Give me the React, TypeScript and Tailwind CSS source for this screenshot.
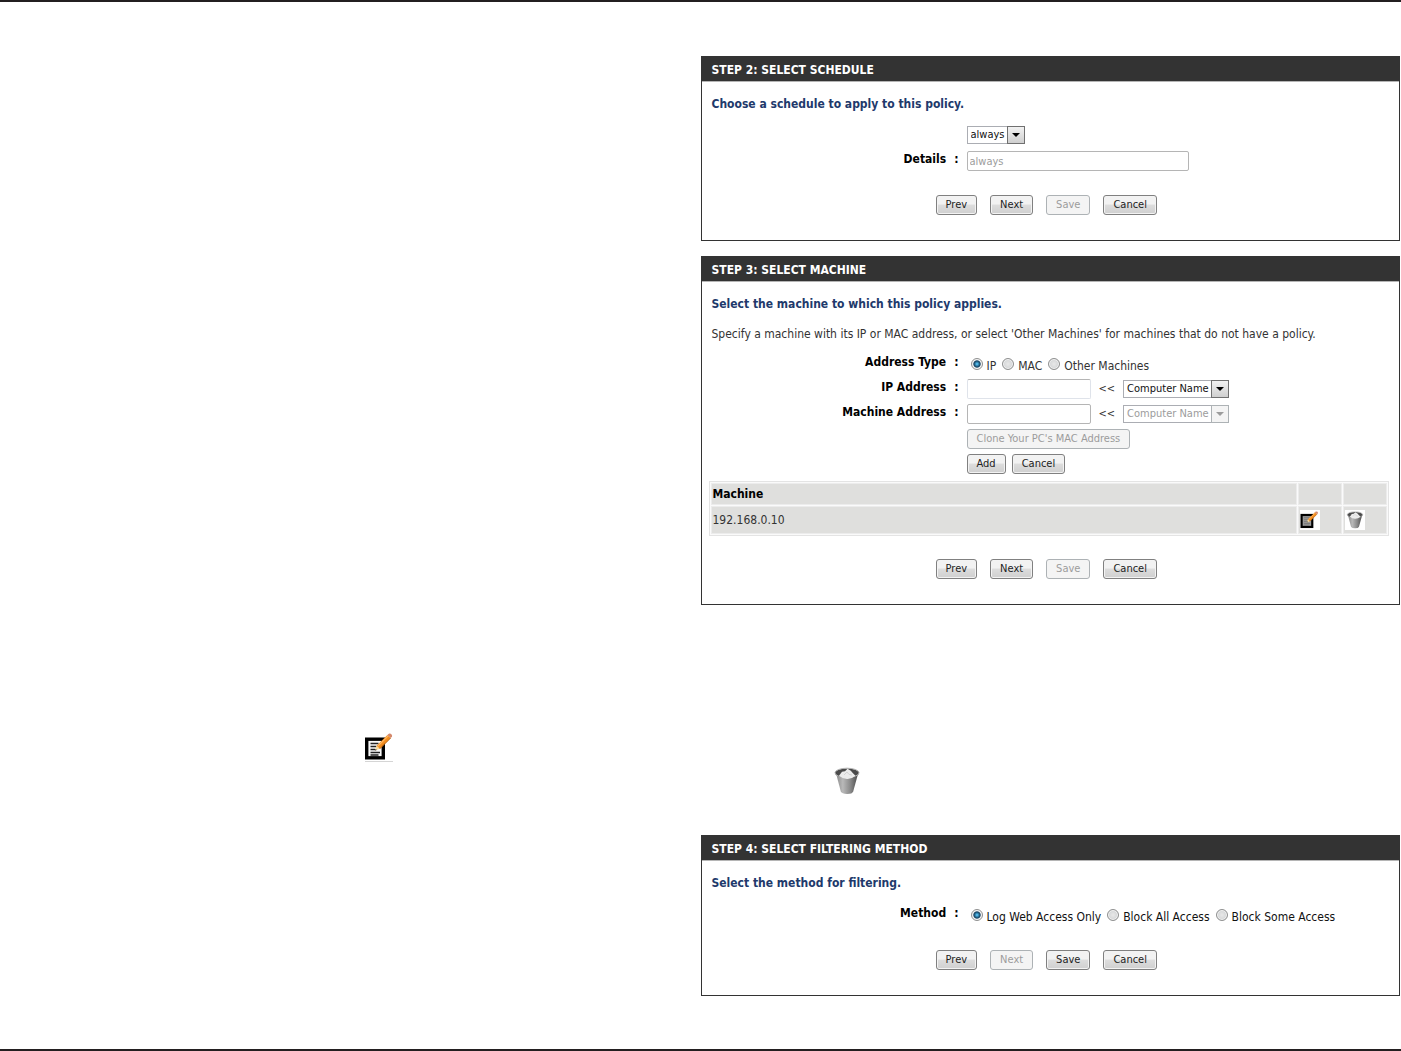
import { useState } from 'react';
import type { ComponentProps, ReactNode } from 'react';
import clsx from 'clsx';

const EditIcon = ({ className, muted }: { className?: string; muted?: boolean }) => (
  <svg viewBox="0 0 28 28" className={className} aria-hidden="true">
    <rect x="1.7" y="6.2" width="16.6" height="18.6" fill={muted ? '#9b9b9b' : '#f8f8f8'} stroke="#000" strokeWidth="3.4" />
    <path
      d="M5.5 10.5h8M5.5 13.5h6M5.5 16.5h4.5M5.5 19.5h9.5M5.5 22h8"
      stroke={muted ? '#777' : '#222'}
      strokeWidth="1.3"
    />
    <path d="M9.8 17.8l1.8-5 3.2 3z" fill="#f8dc9c" />
    <path d="M9.8 17.8l.7-2 1.4 1.2z" fill="#444" />
    <path d="M11.6 12.8L22.4 2l3.2 3-10.8 10.8z" fill="#f28c1e" />
    <path d="M12.6 13.4L23.2 2.9" stroke="#ffb964" strokeWidth="1.2" />
    <path d="M14.8 15.8L25.6 5" stroke="#b8620f" strokeWidth="1" />
    <path d="M22.4 2L23.8.8q1.5-.6 2.6.5t.6 2.4L25.6 5z" fill="#d4896c" />
  </svg>
);

const TrashIcon = ({ className }: { className?: string }) => (
  <svg viewBox="0 0 26 28" className={className} aria-hidden="true">
    <defs>
      <linearGradient id="can" x1="0" x2="1" y1="0" y2="0">
        <stop offset="0" stopColor="#8c8c8c" />
        <stop offset="0.3" stopColor="#b9b9b9" />
        <stop offset="0.65" stopColor="#8a8a8a" />
        <stop offset="1" stopColor="#4c4c4c" />
      </linearGradient>
    </defs>
    <path d="M2.2 7L6.8 24.4q1 2.4 6.2 2.5t6.2-2.5L24 7z" fill="url(#can)" />
    <ellipse cx="13" cy="6" rx="12" ry="4.6" fill="#4b4b4b" />
    <ellipse cx="13" cy="5.8" rx="12" ry="4.6" fill="none" stroke="#b0b0b0" strokeWidth="1" />
    <path d="M5 8.8l3-4 3-.6 2.5-2.4 3.3 2 1.7 2 3 3q-3.8 3.4-8.5 3.2T5 8.8z" fill="#ececec" />
    <path d="M10 8l3-3 2 2.4 3 .6" stroke="#d4d4d4" strokeWidth="1" fill="none" />
  </svg>
);

const Button = ({ className, ...props }: ComponentProps<'button'>) => (
  <button
    type="button"
    className={clsx(
      'h-5 rounded-[3px] border px-[9px] text-[11px] leading-[16px] whitespace-nowrap',
      props.disabled
        ? 'border-[#adb2b5] bg-[#f4f4f4] text-[#9c9c9c]'
        : 'border-[#808080] bg-linear-to-b from-[#f2f2f2] from-45% via-[#dddddd] via-50% to-[#cfcfcf] text-[#222] shadow-[inset_0_0_0_1px_#f3f3f3]',
      className
    )}
    {...props}
  />
);

const Select = ({ children, ...props }: ComponentProps<'select'>) => (
  <span className="relative inline-flex">
    <select
      className="h-[18px] appearance-none border border-[#abadb3] bg-white pr-[19px] pl-[3px] text-[11px] leading-[16px] text-[#111] disabled:text-[#9c9c9c] disabled:opacity-100"
      {...props}
    >
      {children}
    </select>
    <span
      className={clsx(
        'pointer-events-none absolute inset-y-0 right-0 flex w-[18px] items-center justify-center border',
        props.disabled
          ? 'border-[#adb2b5] bg-[#f4f4f4] text-[#9c9c9c]'
          : 'border-[#707070] bg-linear-to-b from-[#f2f2f2] to-[#cfcfcf] text-black'
      )}
    >
      <svg viewBox="0 0 8 4" className="h-1 w-2" aria-hidden="true">
        <path d="M0 0h8L4 4z" fill="currentColor" />
      </svg>
    </span>
  </span>
);

const Radio = ({ label, ...props }: ComponentProps<'input'> & { label: string }) => (
  <label className="flex items-start gap-1">
    <input
      type="radio"
      className="size-3 appearance-none rounded-full border border-[#8e8f8f] bg-radial from-[#e8e8e8] to-[#c9ccce] shadow-[inset_0_0_0_1px_#f4f4f4] checked:bg-radial checked:from-[#4fb4e4] checked:from-10% checked:via-[#12405f] checked:via-45% checked:to-[#f4f4f4] checked:to-60%"
      {...props}
    />
    <span className="leading-[16px]">{label}</span>
  </label>
);

const Panel = ({ title, heading, children }: { title: string; heading: string; children: ReactNode }) => (
  <section className="border border-[#333]">
    <h2 className="border-b border-[#b5b5b5] bg-[#333] px-[10px] pt-[5px] pb-[3px] text-[12px] leading-[16px] font-bold text-white uppercase">
      {title}
    </h2>
    <div className="px-[10px] pt-[14px] pb-[25px]">
      <h3 className="text-[12px] leading-[16px] font-bold text-[#21396b]">{heading}</h3>
      {children}
    </div>
  </section>
);

// Label on the left with its colon, control on the right
const Row = ({ label, htmlFor, children }: { label?: string; htmlFor?: string; children: ReactNode }) => (
  <div className="flex min-h-[25px] items-start gap-2">
    <div className="flex w-[247px] shrink-0 justify-end gap-2 leading-[18px] font-bold text-black">
      {label && (
        <>
          <label htmlFor={htmlFor}>{label}</label>
          <span>:</span>
        </>
      )}
    </div>
    <div className="flex items-center pt-px">{children}</div>
  </div>
);

const WizardButtons = ({ disabled }: { disabled: string }) => (
  <div className="flex justify-center gap-[13px] pr-2">
    {['Prev', 'Next', 'Save', 'Cancel'].map((name) => (
      <Button key={name} disabled={name === disabled}>
        {name}
      </Button>
    ))}
  </div>
);

const cell = 'border border-[#ececec] bg-[#dfdfdd] p-px text-left';

const App = () => {
  const [addressType, setAddressType] = useState('IP');
  const [method, setMethod] = useState('Log Web Access Only');

  return (
    <main className="border-y-2 border-[#231f20] bg-white pt-[54px] pb-[53px] font-['DejaVu_Sans_Condensed','DejaVu_Sans',sans-serif] text-[12px] text-[#333]">
      <div className="grid grid-cols-2">
        <div className="col-start-2 flex flex-col gap-[15px] pr-px">
          <Panel title="Step 2: Select Schedule" heading="Choose a schedule to apply to this policy.">
            <div className="pt-[13px] pb-5">
              <Row>
                <Select aria-label="Schedule">
                  <option>always</option>
                </Select>
              </Row>
              <Row label="Details" htmlFor="details">
                <input
                  id="details"
                  disabled
                  defaultValue="always"
                  className="h-5 w-[222px] rounded-[2px] border border-[#b5b5b5] bg-white px-0.5 text-[11px] text-[#9c9c9c]"
                />
              </Row>
            </div>
            <WizardButtons disabled="Save" />
          </Panel>

          <Panel title="Step 3: Select Machine" heading="Select the machine to which this policy applies.">
            <p className="pt-[14px] leading-[16px] whitespace-nowrap">
              Specify a machine with its IP or MAC address, or select 'Other Machines' for machines that do not have a policy.
            </p>
            <div className="pt-[11px]">
              <Row label="Address Type">
                <div className="flex gap-1.5 pt-1 pl-1">
                  {['IP', 'MAC', 'Other Machines'].map((type) => (
                    <Radio
                      key={type}
                      name="addressType"
                      label={type}
                      checked={addressType === type}
                      onChange={() => setAddressType(type)}
                    />
                  ))}
                </div>
              </Row>
              <Row label="IP Address" htmlFor="ip">
                <input id="ip" className="h-5 w-[124px] rounded-[2px] border border-[#dfe3ea] border-t-[#b5b5b5] px-0.5" />
                <span className="px-2 text-[11px]">&lt;&lt;</span>
                <Select aria-label="Computer name for IP address">
                  <option>Computer Name</option>
                </Select>
              </Row>
              <Row label="Machine Address" htmlFor="mac">
                <input id="mac" className="h-5 w-[124px] rounded-[2px] border border-[#b5b5b5] px-0.5" />
                <span className="px-2 text-[11px]">&lt;&lt;</span>
                <Select aria-label="Computer name for machine address" disabled>
                  <option>Computer Name</option>
                </Select>
              </Row>
              <Row>
                <Button disabled>Clone Your PC's MAC Address</Button>
              </Row>
              <Row>
                <div className="flex gap-1.5">
                  <Button>Add</Button>
                  <Button>Cancel</Button>
                </div>
              </Row>
            </div>

            <div className="-mx-[3px] pt-[3px] pb-[23px]">
              <table className="w-[680px] max-w-full border-separate border-spacing-px border border-[#e4e4e4] bg-[#fafafa]">
                <thead>
                  <tr className="h-[22px] text-black">
                    <th className={cell}>Machine</th>
                    <th className={clsx(cell, 'w-[44px]')} aria-label="Edit" />
                    <th className={clsx(cell, 'w-[44px]')} aria-label="Delete" />
                  </tr>
                </thead>
                <tbody>
                  <tr className="h-7">
                    <td className={cell}>192.168.0.10</td>
                    <td className={cell}>
                      <button type="button" aria-label="Edit machine" className="block bg-white py-px pr-px">
                        <EditIcon muted className="h-[18px] w-[19px]" />
                      </button>
                    </td>
                    <td className={cell}>
                      <button type="button" aria-label="Delete machine" className="block bg-white px-px py-px">
                        <TrashIcon className="size-[18px]" />
                      </button>
                    </td>
                  </tr>
                </tbody>
              </table>
            </div>
            <WizardButtons disabled="Save" />
          </Panel>
        </div>

        {/* Edit and delete icons */}
        <div className="flex h-[230px] items-start pt-[128px] pl-[365px]">
          <span className="border-b border-[#d5d5d5]">
            <EditIcon className="size-7" />
          </span>
        </div>
        <div className="flex h-[230px] items-start pt-[162px] pl-[133px]">
          <TrashIcon className="h-7 w-[26px]" />
        </div>

        <div className="col-start-2 pr-px">
          <Panel title="Step 4: Select Filtering Method" heading="Select the method for filtering.">
            <div className="pt-[13px] pb-[21px]">
              <Row label="Method">
                <div className="flex gap-1.5 pt-1 pl-1 text-[#111]">
                  {['Log Web Access Only', 'Block All Access', 'Block Some Access'].map((name) => (
                    <Radio
                      key={name}
                      name="method"
                      label={name}
                      checked={method === name}
                      onChange={() => setMethod(name)}
                    />
                  ))}
                </div>
              </Row>
            </div>
            <WizardButtons disabled="Next" />
          </Panel>
        </div>
      </div>
    </main>
  );
};

export default App;
